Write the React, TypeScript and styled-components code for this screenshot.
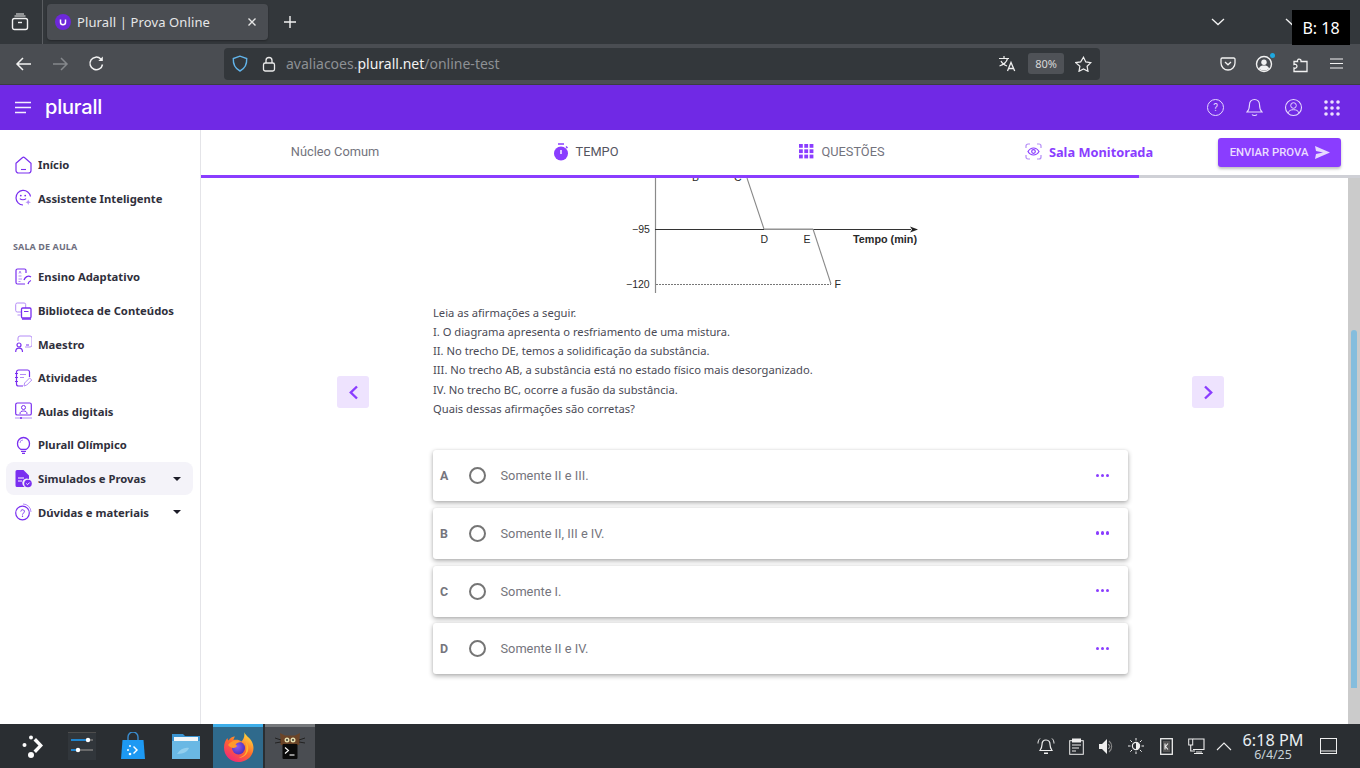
import React from "react";
import styled, { createGlobalStyle } from "styled-components";

const Global = createGlobalStyle`
  html, body { margin: 0; padding: 0; background: #fff; overflow: hidden; }
  * { box-sizing: border-box; }
`;

const PURPLE = "#7a2ff0";
const ACCENT = "#8a3dff";

const Page = styled.div`
  width: 1360px; height: 768px; display: flex; flex-direction: column; overflow: hidden; position: relative;
  font-family: "Noto Sans", sans-serif;
`;

/* browser chrome */
const TabBar = styled.div`
  height: 44px; background: #33373b; display: flex; align-items: center; color: #fcfcfc; flex: none;
`;
const TabListButton = styled.div`
  width: 43px; height: 44px; border-right: 1px solid #5a5d61; display: flex; align-items: center; justify-content: center; padding-right: 2px;
`;
const Tab = styled.div`
  margin-left: 4px; width: 221px; height: 36px; background: #4a4d52; border-radius: 4px; display: flex; align-items: center; padding: 0 11px 0 8px; gap: 6px; box-shadow: 0 1px 2px rgba(0,0,0,.3);
`;
const Favicon = styled.div`
  width: 16px; height: 16px; border-radius: 50%; background: #6d28d9; display: flex; align-items: center; justify-content: center; flex: none;
`;
const TabTitle = styled.span`
  flex: 1; font-size: 13px; color: #e6e7e8; white-space: nowrap; letter-spacing: .12px;
`;
const NewTab = styled.div`
  margin-left: 15px; display: flex;
`;
const TabBarEnd = styled.div`
  margin-left: auto; display: flex; gap: 60px; padding-right: 61px; align-items: center;
`;
const Hud = styled.div`
  position: absolute; left: 1292px; top: 10px; width: 58px; height: 35px; background: #000; color: #fff; font-size: 16px; display: flex; align-items: center; justify-content: center; font-family: "Noto Sans", sans-serif;
`;
const NavBar = styled.div`
  height: 41px; background: #4a4d52; display: flex; align-items: center; flex: none; border-bottom: 1px solid #3a3d41; padding-bottom: 1px;
`;
const NavButtons = styled.div`
  width: 224px; display: flex; align-items: center; padding-left: 15px; gap: 18px; flex: none;
`;
const ReloadSlot = styled.span`
  display: flex; margin-left: 1px;
`;
const UrlBar = styled.div`
  width: 876px; height: 32px; background: #33373b; border-radius: 4px; display: flex; align-items: center; padding: 0 8px 0 8px; flex: none;
`;
const UrlGap = styled.span`
  width: 14px; flex: none;
`;
const UrlText = styled.div`
  margin-left: 10px; font-size: 14px; color: #8d9094; flex: 1; white-space: nowrap;
`;
const UrlHost = styled.span`
  color: #f2f2f2;
`;
const ZoomBadge = styled.div`
  width: 36px; height: 21px; background: #4f5257; border-radius: 3px; color: #d8d8d8; font-size: 11px; display: flex; align-items: center; justify-content: center; margin: 0 11px 0 12px;
`;
const NavEnd = styled.div`
  margin-left: 120px; display: flex; align-items: center;
`;
const NavEndSlot = styled.span<{ $ml: number }>`
  display: flex; position: relative; margin-left: ${p => p.$ml}px;
`;
const NoticeDot = styled.i`
  position: absolute; right: -2px; top: -2px; width: 5px; height: 5px; border-radius: 3px; background: #1ea8e0;
`;

/* page header */
const Header = styled.header`
  height: 45px; background: #7029e5; display: flex; align-items: center; padding: 0 20px 0 15px; flex: none;
`;
const Logo = styled.div`
  margin-left: 14px; color: #fff; font-family: Inter, sans-serif; font-weight: 500; font-size: 20px; letter-spacing: -.2px; line-height: 1; padding-bottom: 1px;
`;
const HeaderEnd = styled.div`
  margin-left: auto; display: flex; align-items: center; gap: 21px;
`;

const Body = styled.div`
  flex: 1; display: flex; min-height: 0;
`;
const Sidebar = styled.aside`
  width: 201px; border-right: 1px solid #e4e4e8; padding: 18px 7px 0 6px; flex: none; background: #fff;
`;
const NavItem = styled.div<{ $active?: boolean }>`
  height: 33.6px; display: flex; align-items: center; padding: 0 10px 0 9px; gap: 6px; border-radius: 8px;
  background: ${p => (p.$active ? "#f4f3f9" : "transparent")};
  font-size: 11.28px; font-weight: 700; color: #30303c; white-space: nowrap;
`;
const NavIconBox = styled.span`
  width: 17px; height: 18px; display: flex; flex: none; align-items: center; justify-content: center;
`;
const Caret = styled.span`
  margin-left: auto; width: 0; height: 0; border-left: 4.5px solid transparent; border-right: 4.5px solid transparent; border-top: 4.5px solid #1c1c28; margin-right: 2px;
`;
const SectionLabel = styled.div`
  margin: 24px 0 5px 7px; height: 16px; line-height: 16px; font-size: 9px; font-weight: 700; color: #6f6f80; letter-spacing: .1px;
`;

const Main = styled.main`
  flex: 1; display: flex; flex-direction: column; min-width: 0;
`;
const SubNav = styled.div`
  height: 45px; display: grid; grid-template-columns: 268px 233px 280px 214px 1fr; align-items: center; flex: none;
`;
const SubCell = styled.div`
  display: flex; align-items: center; justify-content: center; gap: 7px; font-family: Roboto, sans-serif; font-size: 12.8px; color: #73737d; white-space: nowrap; padding-bottom: 2px;
`;
const TimeLabel = styled.span`
  color: #55555f;
`;
const MonitorLabel = styled.span`
  font-family: "Noto Sans", sans-serif; font-weight: 700; font-size: 12.8px; color: ${ACCENT};
`;
const SendButton = styled.div`
  margin-left: 22px; width: 123px; height: 29px; background: ${ACCENT}; color: #eadcff; border-radius: 3px; display: flex; align-items: center; justify-content: center; gap: 7px; padding: 0 0 1px 1px; font-family: Roboto, sans-serif; font-size: 11.3px; font-weight: 500; box-shadow: 0 2px 3px rgba(0,0,0,.25);
`;
const Progress = styled.div`
  height: 3px; background: #cfd0d6; flex: none;
`;
const ProgressFill = styled.div`
  height: 3px; background: ${ACCENT};
`;
const ScrollArea = styled.div`
  flex: 1; display: flex; min-height: 0; overflow: hidden;
`;
const Content = styled.div`
  flex: 1; display: grid; grid-template-columns: 32px 695px 32px; column-gap: 64px; padding-left: 136px; align-content: start;
`;
const ArrowButton = styled.div`
  width: 32px; height: 32px; margin-top: 198px; background: #eee3fe; border-radius: 3px; display: flex; align-items: center; justify-content: center;
`;
const Question = styled.div`
  display: flex; flex-direction: column;
`;
const Diagram = styled.svg`
  display: block; margin-left: 187px; flex: none;
`;
const Statement = styled.div`
  margin-top: 7.5px; margin-bottom: 32px; font-size: 11.2px; line-height: 19.3px; color: #4a4a55;
`;
const Options = styled.div`
  display: flex; flex-direction: column; gap: 6.7px;
`;
const Option = styled.div`
  height: 51px; background: #fff; border-radius: 3px; box-shadow: 0 2px 5px rgba(0,0,0,.32), 0 0 2px rgba(0,0,0,.08); display: flex; align-items: center; font-family: Roboto, sans-serif; color: #75757d; padding: 0 19px 0 7px;
`;
const OptionLetter = styled.span`
  width: 29px; font-size: 12.4px; font-weight: 700;
`;
const Radio = styled.span`
  width: 17px; height: 17px; border: 2px solid #757575; border-radius: 50%; flex: none;
`;
const OptionText = styled.span`
  margin-left: 14.5px; font-size: 12.8px; flex: 1;
`;
const Dots = styled.span`
  display: flex; gap: 1.5px; margin-top: -1px;
`;
const Dot = styled.i`
  width: 3.5px; height: 3.5px; border-radius: 50%; background: ${ACCENT}; display: block;
`;
const ScrollTrack = styled.div`
  width: 12px; background: #cbcbcb; padding: 152px 3px 0; flex: none;
`;
const ScrollThumb = styled.div`
  height: 358px; background: #85bddd; border-radius: 3px 3px 0 0;
`;

/* taskbar */
const Taskbar = styled.footer`
  height: 44px; background: #2a2e32; display: flex; align-items: center; padding-left: 10px; flex: none; color: #fcfcfc;
`;
const TaskItem = styled.div<{ $w: number; $bg?: string; $line?: string; $ml?: number }>`
  width: ${p => p.$w}px; height: 44px; margin-left: ${p => p.$ml ?? 0}px; display: flex; align-items: center; justify-content: center;
  background: ${p => p.$bg ?? "transparent"}; border-top: 3px solid ${p => p.$line ?? "transparent"}; padding-bottom: 3px;
`;
const Tray = styled.div`
  margin-left: auto; display: flex; align-items: center; padding-right: 23px;
`;
const TraySlot = styled.div<{ $w?: number }>`
  width: ${p => p.$w ?? 30}px; display: flex; justify-content: center;
`;
const Clock = styled.div`
  width: 64px; margin-left: 4px; margin-right: 15px; text-align: center; color: #e8eef2; font-family: "Noto Sans", sans-serif; line-height: 1;
`;
const ClockTime = styled.div`
  font-size: 16.2px; line-height: 17px; white-space: nowrap;
`;
const ClockDate = styled.div`
  font-size: 12.4px; line-height: 11px; color: #c8d3da;
`;

const W = "#f2f2f2";
const I = ({ w = 18, h = 18, children, vb }: { w?: number; h?: number; vb?: string; children: React.ReactNode }) => (
  <svg width={w} height={h} viewBox={vb ?? `0 0 ${w} ${h}`} fill="none" style={{ display: "block", flex: "none" }}>{children}</svg>
);

/* sidebar icons */
const P = PURPLE;
const L = "#b48cf7";
const HomeIcon = () => (
  <I w={17} h={18}><path d="M1 7.2 7.300 1.700a1.800 1.800 0 0 1 2.400 0L16 7.200V14.500a2.500 2.500 0 0 1-2.500 2.500h-10A2.500 2.500 0 0 1 1 14.500z" stroke={P} strokeWidth="1.200" /><path d="M6 13.500h5" stroke={P} strokeWidth="1.100" /></I>
);
const AssistIcon = () => (
  <I w={17} h={18}><path d="M15.500 7.500A7.300 7.300 0 1 0 8 16" stroke={P} strokeWidth="1.200" /><circle cx="5.800" cy="6.600" r=".9" fill={P} /><circle cx="10.200" cy="6.600" r=".9" fill={P} /><path d="M4.800 9.600c1.600 1.500 4.600 1.500 6.300 0" stroke={P} strokeWidth="1.100" /><path d="M13.200 10.500l.8 2 2 .8-2 .8-.8 2-.8-2-2-.8 2-.8z" fill={L} /></I>
);
const AdaptiveIcon = () => (
  <I w={17} h={18}><path d="M10 16H2.500A1.500 1.500 0 0 1 1 14.500v-12A1.500 1.500 0 0 1 2.500 1h7A1.500 1.500 0 0 1 11 2.500V5" stroke={P} strokeWidth="1.200" /><path d="M3.500 8h3M3.500 11h3.500M3.500 13.500h2" stroke={L} /><path d="M9 12c1-3 4-5 7-3M13 16c.5-2 1.500-3 3-3.500" stroke={P} strokeWidth="1.300" /><path d="M4 5.500 5 3l1 2.500" stroke={L} /></I>
);
const LibraryIcon = () => (
  <I w={17} h={18}><rect x=".7" y="1" width="10" height="9" rx="1.600" stroke={L} /><path d="M2.500 13h3" stroke={L} /><rect x="6.500" y="6" width="9.500" height="10" rx="1.200" fill="#fff" stroke={P} strokeWidth="1.300" /><path d="M9 9.500h4.500" stroke={P} /><path d="M7 17h9" stroke={P} strokeWidth="1.500" /></I>
);
const MaestroIcon = () => (
  <I w={17} h={18}><path d="M3 6V3a2 2 0 0 1 2-2h10a2 2 0 0 1 2 2v7a2 2 0 0 1-2 2h-5" stroke={L} /><circle cx="4" cy="10" r="2" stroke={P} strokeWidth="1.200" /><path d="M.7 17c0-3 1.500-3.800 3.300-3.800S7.500 14 7.500 17" stroke={P} strokeWidth="1.200" /><path d="M11 10h3" stroke={P} /></I>
);
const ActivityIcon = () => (
  <I w={17} h={18}><path d="M14.500 8V3a2 2 0 0 0-2-2h-9a2 2 0 0 0-2 2v12a2 2 0 0 0 2 2H8" stroke={P} strokeWidth="1.200" /><path d="M0 4.500h3M0 8.500h3M0 12.500h3" stroke={P} /><path d="M5 5.500h6M5 8.500h4" stroke={L} /><path d="M9 17l.6-3 5-5 2.200 2-5 5z" stroke={L} /></I>
);
const LessonIcon = () => (
  <I w={17} h={18}><rect x=".7" y="1" width="15.600" height="12" rx="1.600" stroke={P} strokeWidth="1.200" /><circle cx="8.500" cy="5.500" r="2" stroke={P} /><path d="M5 12c0-2.500 1.500-3 3.500-3s3.500.5 3.500 3" stroke={P} /><path d="M0 16h17" stroke={L} /><circle cx="6" cy="16" r="1" fill={P} /></I>
);
const BulbIcon = () => (
  <I w={17} h={18}><path d="M6 13.500C4 12.300 2.500 10.300 2.500 7.500a6 6 0 0 1 12 0c0 2.800-1.500 4.800-3.500 6z" stroke={P} strokeWidth="1.300" /><path d="M6 15.500h5M7 17.300h3" stroke={P} strokeWidth="1.200" /><path d="M5 7a3 3 0 0 1 3-3" stroke={L} /></I>
);
const ExamIcon = () => (
  <I w={17} h={18}><path d="M2 0h6.500L14 5.500V9a4.500 4.500 0 0 0-4.300 8H2a1.500 1.500 0 0 1-1.500-1.500v-14A1.500 1.500 0 0 1 2 0z" fill={P} /><path d="M3 8h6M3 11h4" stroke="#fff" /><circle cx="13" cy="13.500" r="3.800" fill={P} /><path d="M11.300 13.500l1.200 1.200 2.200-2.200" stroke="#fff" /></I>
);
const DoubtIcon = () => (
  <I w={17} h={18}><circle cx="7.500" cy="10" r="6.800" stroke={P} strokeWidth="1.200" /><path d="M5.800 8.500a1.800 1.800 0 1 1 2.700 1.600c-.7.400-1 .8-1 1.400" stroke={P} /><circle cx="7.500" cy="13.300" r=".7" fill={P} /><path d="M8 1a8 8 0 0 1 8 8" stroke={L} /></I>
);

/* firefox logo */
const FirefoxIcon = () => (
  <svg width="31" height="31" viewBox="0 0 31 31" style={{ display: "block" }}>
    <defs>
      <linearGradient id="ffa" x1="0.8" y1="0.1" x2="0.2" y2="1"><stop offset="0" stopColor="#ffd23a" /><stop offset=".45" stopColor="#ff6a2a" /><stop offset="1" stopColor="#f1237e" /></linearGradient>
      <radialGradient id="ffb" cx=".4" cy=".4" r=".7"><stop offset="0" stopColor="#8a5cf0" /><stop offset="1" stopColor="#4a2bb5" /></radialGradient>
    </defs>
    <path d="M21 1c1 3 5 5 7.500 9 3 5 2.500 11-1 15.500C24 29.500 19.500 31 15.500 31 7 31 1 24.500 1 16.500c0-4 1.500-7.500 3.500-9.500 0 1 .5 2 1 2.500C7 7 9.500 5.500 12 5.500c-1 1.500-1.500 2.500-1.500 3.500 3-.8 6-.2 8 1.500C21 8 22 4 21 1z" fill="url(#ffa)" />
    <circle cx="15.500" cy="17" r="6.500" fill="url(#ffb)" />
    <path d="M5 14c2-3 5-4.500 8-4.500 2 0 4 .8 5.500 2-3-.5-5 .5-6 2.500 3 0 1 3-2 3-2 0-4-1-5.500-3z" fill="#ff9a2a" />
    <path d="M23 11c3 4 3 9 0 12.500-2 2.500-5 3.500-8 3 4 0 7-2.500 8-6 .7-3 .5-6.500 0-9.500z" fill="#ffb52e" />
  </svg>
);

const navTop = [
  { l: "Início", i: <HomeIcon /> },
  { l: "Assistente Inteligente", i: <AssistIcon /> },
];
const navRest = [
  { l: "Ensino Adaptativo", i: <AdaptiveIcon /> },
  { l: "Biblioteca de Conteúdos", i: <LibraryIcon /> },
  { l: "Maestro", i: <MaestroIcon /> },
  { l: "Atividades", i: <ActivityIcon /> },
  { l: "Aulas digitais", i: <LessonIcon /> },
  { l: "Plurall Olímpico", i: <BulbIcon /> },
  { l: "Simulados e Provas", i: <ExamIcon />, active: true, caret: true },
  { l: "Dúvidas e materiais", i: <DoubtIcon />, caret: true },
];
const lines = [
  "Leia as afirmações a seguir.",
  "I. O diagrama apresenta o resfriamento de uma mistura.",
  "II. No trecho DE, temos a solidificação da substância.",
  "III. No trecho AB, a substância está no estado físico mais desorganizado.",
  "IV. No trecho BC, ocorre a fusão da substância.",
  "Quais dessas afirmações são corretas?",
];
const options = [
  ["A", "Somente II e III."],
  ["B", "Somente II, III e IV."],
  ["C", "Somente I."],
  ["D", "Somente II e IV."],
];

const tl = { fontFamily: "Liberation Sans, sans-serif", fontSize: 10.5, fill: "#2a2a2a" } as const;

export default function App() {
  return (
    <Page>
      <Global />
      <TabBar>
        <TabListButton>
          <I w={18} h={18}><rect x="1.500" y="5.500" width="15" height="11" rx="2" stroke={W} strokeWidth="1.400" /><path d="M3.500 3h11M5 1h8" stroke={W} strokeWidth="1.200" /><path d="M7 9.500h4" stroke={W} strokeWidth="1.400" /></I>
        </TabListButton>
        <Tab>
          <Favicon>
            <I w={10} h={10}><path d="M2.500 2.500v2.800a2.500 2.500 0 0 0 5 0V2.500" stroke="#fff" strokeWidth="1.500" /></I>
          </Favicon>
          <TabTitle>Plurall | Prova Online</TabTitle>
          <I w={10} h={10}><path d="M1.500 1.500l7 7M8.500 1.500l-7 7" stroke="#e6e6e6" strokeWidth="1.400" /></I>
        </Tab>
        <NewTab>
          <I w={14} h={14}><path d="M7 1v12M1 7h12" stroke={W} strokeWidth="1.400" /></I>
        </NewTab>
        <TabBarEnd>
          <I w={14} h={8}><path d="M1 1l6 5.500L13 1" stroke={W} strokeWidth="1.300" /></I>
          <I w={14} h={8}><path d="M1 1l6 5.500L13 1" stroke={W} strokeWidth="1.300" /></I>
        </TabBarEnd>
      </TabBar>
      <Hud>B: 18</Hud>
      <NavBar>
        <NavButtons>
          <I w={18} h={16}><path d="M16 8H2M8 2 2 8l6 6" stroke={W} strokeWidth="1.500" /></I>
          <I w={18} h={16}><path d="M2 8h14M10 2l6 6-6 6" stroke="#85888c" strokeWidth="1.500" /></I>
          <ReloadSlot>
            <I w={17} h={17}><path d="M14.500 9.500A6.300 6.300 0 1 1 12.800 4" stroke={W} strokeWidth="1.500" /><path d="M14.800 1.500V6h-4.500" fill={W} /></I>
          </ReloadSlot>
        </NavButtons>
        <UrlBar>
          <I w={16} h={17}><path d="M8 1.200 1.300 3.500C1 9 3 13.500 8 16c5-2.500 7-7 6.700-12.500z" stroke="#62b4ea" strokeWidth="1.400" /></I>
          <UrlGap />
          <I w={14} h={16}><rect x="1.500" y="7" width="11" height="8" rx="1.800" stroke="#eaeaea" strokeWidth="1.300" /><path d="M4 7V4.500a3 3 0 0 1 6 0V7" stroke="#eaeaea" strokeWidth="1.300" /></I>
          <UrlText>avaliacoes.<UrlHost>plurall.net</UrlHost>/online-test</UrlText>
          <I w={18} h={17}><path d="M1 3.500h10M6 1v2.500M9.500 3.500c-.7 3-3.500 6-8 7.500M3 6c1 2.500 3.500 4 6 5" stroke="#eee" strokeWidth="1.200" /><path d="M9.500 16l3.500-8.500 3.700 8.500M10.700 13.500h4.800" stroke="#eee" strokeWidth="1.300" /></I>
          <ZoomBadge>80%</ZoomBadge>
          <I w={17} h={16}><path d="M8.500 1.200l2.300 4.700 5 .7-3.700 3.600.9 5.100-4.500-2.400-4.500 2.400.9-5.100L.7 6.600l5-.7z" stroke="#eee" strokeWidth="1.200" /></I>
        </UrlBar>
        <NavEnd>
          <I w={16} h={14}><path d="M1 2.200A1.200 1.200 0 0 1 2.200 1h11.600A1.200 1.200 0 0 1 15 2.200V6a7 7 0 0 1-14 0z" stroke={W} strokeWidth="1.300" /><path d="M5 5l3 2.800L11 5" stroke={W} strokeWidth="1.300" /></I>
          <NavEndSlot $ml={19}>
            <I w={18} h={18}><circle cx="9" cy="9" r="7.500" stroke={W} strokeWidth="1.400" /><circle cx="9" cy="7.200" r="2.700" fill={W} /><path d="M3.800 13.500c1-2.500 3-3 5.200-3s4.200.5 5.200 3c-1.300 1.300-3.200 2-5.200 2s-3.900-.7-5.200-2z" fill={W} /></I>
            <NoticeDot />
          </NavEndSlot>
          <NavEndSlot $ml={20}>
            <I w={15} h={18}><path d="M1 7h3.500a1.800 1.800 0 1 1 3.500-.5c0 .2 0-.3 0 .5H14V17H1v-3.500a2 2 0 1 0 0-3.500z" stroke={W} strokeWidth="1.300" transform="translate(0 -.5)" /></I>
          </NavEndSlot>
          <NavEndSlot $ml={22}>
            <I w={13} h={11}><path d="M0 1h13M0 5.500h13M0 10h13" stroke={W} strokeWidth="1.200" /></I>
          </NavEndSlot>
        </NavEnd>
      </NavBar>

      <Header>
        <I w={16} h={13}><path d="M0 1.500h16M0 6.500h16M0 11.500h11" stroke="#f4eeff" strokeWidth="1.500" /></I>
        <Logo>plurall</Logo>
        <HeaderEnd>
          <I w={19} h={19}><circle cx="9.500" cy="9.500" r="8" stroke="#e6d8ff" strokeWidth="1" /><text x="9.500" y="13" textAnchor="middle" fontFamily="Roboto, sans-serif" fontSize="10" fill="#e6d8ff">?</text></I>
          <I w={17} h={19}><path d="M8.500 1.500c-3 0-5 2.200-5 5 0 4-1 6-2.500 7.500h15c-1.500-1.500-2.500-3.500-2.500-7.500 0-2.800-2-5-5-5z" stroke="#e6d8ff" strokeWidth="1.100" /><path d="M6 16.500c1 1.300 4 1.300 5 0" stroke="#e6d8ff" strokeWidth="1.100" /></I>
          <I w={19} h={19}><circle cx="9.500" cy="9.500" r="8" stroke="#e6d8ff" strokeWidth="1.100" /><circle cx="9.500" cy="7.500" r="2.800" stroke="#e6d8ff" /><path d="M4 15c.8-2.500 3-3.300 5.500-3.300s4.700.8 5.500 3.300" stroke="#e6d8ff" /></I>
          <I w={16} h={16}>
            {[2, 8, 14].flatMap(y => [2, 8, 14].map(x => <circle key={`${x}-${y}`} cx={x} cy={y} r="1.800" fill="#ecdfff" />))}
          </I>
        </HeaderEnd>
      </Header>

      <Body>
        <Sidebar>
          {navTop.map(n => (
            <NavItem key={n.l}><NavIconBox>{n.i}</NavIconBox>{n.l}</NavItem>
          ))}
          <SectionLabel>SALA DE AULA</SectionLabel>
          {navRest.map(n => (
            <NavItem key={n.l} $active={n.active}>
              <NavIconBox>{n.i}</NavIconBox>{n.l}{n.caret && <Caret />}
            </NavItem>
          ))}
        </Sidebar>
        <Main>
          <SubNav>
            <SubCell>Núcleo Comum</SubCell>
            <SubCell>
              <I w={16} h={18}><path d="M5 1h6" stroke={ACCENT} strokeWidth="1.500" /><circle cx="8" cy="10.500" r="7" fill={ACCENT} /><path d="M8 7v4" stroke="#fff" strokeWidth="1.400" /><path d="M13 3.500l1.500 1.500" stroke={ACCENT} strokeWidth="1.500" /></I>
              <TimeLabel>TEMPO</TimeLabel>
            </SubCell>
            <SubCell>
              <I w={15} h={15}>
                {[0, 5.300, 10.600].flatMap(y => [0, 5.300, 10.600].map(x => <rect key={`${x}-${y}`} x={x} y={y} width="3.800" height="3.800" fill={ACCENT} />))}
              </I>
              QUESTÕES
            </SubCell>
            <SubCell>
              <I w={17} h={17}><path d="M1 5V3a2 2 0 0 1 2-2h2M12 1h2a2 2 0 0 1 2 2v2M16 12v2a2 2 0 0 1-2 2h-2M5 16H3a2 2 0 0 1-2-2v-2" stroke={L} strokeWidth="1.200" /><path d="M3 8.500c1.500-2.500 3.500-3.500 5.500-3.500s4 1 5.500 3.500C12.500 11 10.500 12 8.500 12S4.500 11 3 8.500z" stroke={ACCENT} strokeWidth="1.200" /><circle cx="8.500" cy="8.500" r="1.800" stroke={ACCENT} strokeWidth="1.200" /></I>
              <MonitorLabel>Sala Monitorada</MonitorLabel>
            </SubCell>
            <SendButton>
              ENVIAR PROVA
              <I w={15} h={13}><path d="M0 0l15 6.500L0 13l1-5 7-1.500L1 5z" fill="#e6d8ff" /></I>
            </SendButton>
          </SubNav>
          <Progress><ProgressFill style={{ width: `${(938 / 1159) * 100}%` }} /></Progress>
          <ScrollArea>
            <Content>
              <ArrowButton>
                <I w={11} h={15}><path d="M9 1.500 2.800 7.500 9 13.500" stroke={ACCENT} strokeWidth="2.400" /></I>
              </ArrowButton>
              <Question>
                <Diagram width="310" height="117" viewBox="620 178 310 117">
                  <path d="M655.500 178v115" stroke="#8a8a8a" strokeWidth="1.200" />
                  <path d="M655 229.500h256" stroke="#333" strokeWidth="1" />
                  <path d="M918 229.500l-8-3 2 3-2 3z" fill="#222" />
                  <path d="M747 178l17 51" stroke="#8a8a8a" strokeWidth="1.100" />
                  <path d="M764 229h49" stroke="#b4b4b4" strokeWidth="1.400" />
                  <path d="M813 229l18 55" stroke="#8a8a8a" strokeWidth="1.100" />
                  <path d="M656 284.500h175" stroke="#777" strokeWidth="1" strokeDasharray="2 1" />
                  <text x="632" y="233" style={tl}>−95</text>
                  <text x="626" y="288" style={tl}>−120</text>
                  <text x="692" y="181" style={tl}>B</text>
                  <text x="734" y="181" style={tl}>C</text>
                  <text x="760.500" y="243" style={tl}>D</text>
                  <text x="803.500" y="243" style={tl}>E</text>
                  <text x="834.500" y="288" style={tl}>F</text>
                  <text x="853" y="243" style={{ ...tl, fontSize: 10.8, fontWeight: 700 }}>Tempo (min)</text>
                </Diagram>
                <Statement>
                  {lines.map(l => <div key={l}>{l}</div>)}
                </Statement>
                <Options>
                  {options.map(([k, t]) => (
                    <Option key={k}>
                      <OptionLetter>{k}</OptionLetter>
                      <Radio />
                      <OptionText>{t}</OptionText>
                      <Dots><Dot /><Dot /><Dot /></Dots>
                    </Option>
                  ))}
                </Options>
              </Question>
              <ArrowButton>
                <I w={11} h={15}><path d="M2 1.500 8.200 7.500 2 13.500" stroke={ACCENT} strokeWidth="2.400" /></I>
              </ArrowButton>
            </Content>
            <ScrollTrack><ScrollThumb /></ScrollTrack>
          </ScrollArea>
        </Main>
      </Body>

      <Taskbar>
        <TaskItem $w={48}>
          <I w={24} h={26}><path d="M14 5l7 7.500-7 7.500-2.500-2.500 5-5-5-5z" fill="#fcfcfc" /><circle cx="9" cy="4.500" r="2" fill="#fcfcfc" /><circle cx="2.500" cy="12" r="2" fill="#fcfcfc" /><circle cx="9" cy="22" r="3" fill="#fcfcfc" /></I>
        </TaskItem>
        <TaskItem $w={47}>
          <I w={28} h={28}><rect width="28" height="28" fill="#31363b" /><path d="M0 0h28v1H0z" fill="#4d4d4d" /><path d="M3 8h17" stroke="#1d99f3" strokeWidth="1.600" /><path d="M20 8h5" stroke="#777" strokeWidth="1.600" /><circle cx="20" cy="8" r="2.200" fill="#fff" /><path d="M3 18h7" stroke="#1d99f3" strokeWidth="1.600" /><path d="M10 18h15" stroke="#777" strokeWidth="1.600" /><circle cx="10" cy="18" r="2.200" fill="#fff" /></I>
        </TaskItem>
        <TaskItem $w={55}>
          <I w={26} h={28}><path d="M8 9V5a5 5 0 0 1 10 0v4" stroke="#3a8dd0" strokeWidth="1.400" /><path d="M2.500 8h21L25 27H1z" fill="#1d99f3" /><circle cx="10" cy="14" r="1" fill="#fff" /><circle cx="8" cy="18" r="1" fill="#fff" /><circle cx="10" cy="22" r="1.300" fill="#fff" /><path d="M14 14l4 4-4 4-1-1 3-3-3-3z" fill="#fff" /></I>
        </TaskItem>
        <TaskItem $w={52}>
          <I w={28} h={26}><path d="M0 1h11l2 2h15v23H0z" fill="#3a93d0" /><rect x="2" y="4" width="24" height="8" fill="#f2f6f8" /><path d="M0 8h28v18H0z" fill="#6ab8e4" /><path d="M5 21c3-5 8-7 12-6-1 3-5 6-12 6z" fill="#93cfee" /></I>
        </TaskItem>
        <TaskItem $w={50} $ml={1} $bg="#2f6a8c" $line="#3daee9"><FirefoxIcon /></TaskItem>
        <TaskItem $w={50} $ml={2} $bg="#4a4d52" $line="#76797c">
          <I w={32} h={30}>
            <path d="M6 2l5 2.500h10L26 2l-.5 5c.8 2 .8 4.500-.5 7H7c-1.300-2.500-1.300-5-.5-7z" fill="#6b4427" />
            <circle cx="13" cy="9" r="2.500" fill="#e4dcae" /><circle cx="19" cy="9" r="2.500" fill="#e4dcae" />
            <circle cx="13" cy="9" r=".9" fill="#222" /><circle cx="19" cy="9" r=".9" fill="#222" />
            <path d="M1 7l6 2M1 12l6-1M31 7l-6 2M31 12l-6-1" stroke="#222" />
            <rect x="8.500" y="13" width="15" height="15" rx="1" fill="#0b0b0b" />
            <path d="M11 16.500l3.500 3-3.500 3" stroke="#fff" strokeWidth="1.100" /><path d="M15.500 24h5" stroke="#fff" strokeWidth="1.100" />
          </I>
        </TaskItem>
        <Tray>
          <TraySlot><I w={18} h={18}><path d="M9 3c-3 0-4 2-4 4.500 0 3-1 4.500-2 6h12c-1-1.500-2-3-2-6C13 5 12 3 9 3z" stroke="#eee" strokeWidth="1.200" /><path d="M7 15.500h4v1.500H7z" fill="#eee" /><path d="M3 1.500C1.500 3 1 4.500 1 6.500M15 1.500c1.500 1.500 2 3 2 5" stroke="#eee" /></I></TraySlot>
          <TraySlot><I w={15} h={17}><rect x=".7" y="2.700" width="13.600" height="13.600" stroke="#eee" /><rect x="3" y=".5" width="9" height="4" fill="#eee" /><path d="M3 7h9M3 10h7M3 13h4" stroke="#eee" /></I></TraySlot>
          <TraySlot><I w={17} h={17}><path d="M1 6h3l5-5v15l-5-5H1z" fill="#eee" /><path d="M11 3a7 7 0 0 1 0 11" stroke="#888" strokeWidth="1.100" /><path d="M10.500 6a3.500 3.500 0 0 1 0 5" stroke="#aaa" /></I></TraySlot>
          <TraySlot><I w={16} h={16}><circle cx="8" cy="8" r="3.600" stroke="#eee" strokeWidth="1.200" /><path d="M8 4.500a3.500 3.500 0 0 1 0 7z" fill="#eee" /><path d="M8 0v2.500M8 13.500V16M0 8h2.500M13.500 8H16M2.300 2.300l1.800 1.800M11.900 11.900l1.800 1.800M2.300 13.700l1.800-1.800M11.900 4.100l1.800-1.800" stroke="#eee" /></I></TraySlot>
          <TraySlot><I w={13} h={17}><rect x=".7" y=".7" width="11.600" height="15.600" stroke="#eee" strokeWidth="1.300" /><rect x="3" y="3" width="7" height="11" fill="#555" /><path d="M5 5.500v6M8 5.500l-2.500 3 2.500 3" stroke="#eee" strokeWidth="1.100" /></I></TraySlot>
          <TraySlot><I w={17} h={17}><path d="M5 1h11v10.500H5" stroke="#eee" strokeWidth="1.100" /><rect x=".7" y="1" width="4" height="6" stroke="#eee" /><path d="M2.700 7v6H7M8 14h6M6 15.500h9" stroke="#eee" strokeWidth="1.100" /></I></TraySlot>
          <TraySlot $w={26}><I w={16} h={9}><path d="M1 8l7-7 7 7" stroke="#eee" strokeWidth="1.100" /></I></TraySlot>
          <Clock>
            <ClockTime>6:18 PM</ClockTime>
            <ClockDate>6/4/25</ClockDate>
          </Clock>
          <I w={17} h={16}><rect x=".5" y=".5" width="16" height="15" stroke="#eee" /><path d="M1 13h15" stroke="#eee" /></I>
        </Tray>
      </Taskbar>
    </Page>
  );
}
